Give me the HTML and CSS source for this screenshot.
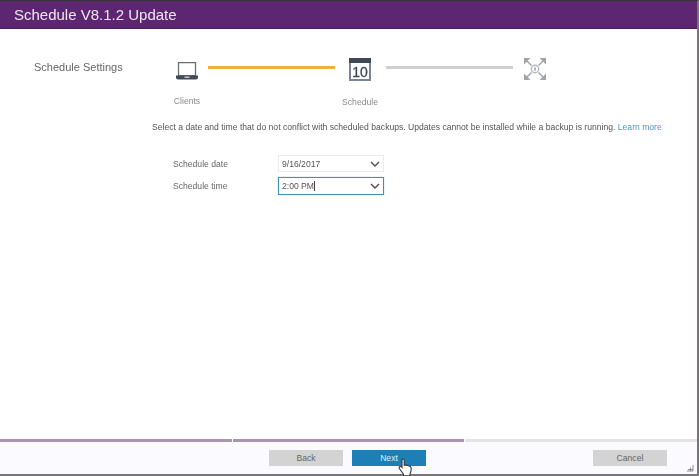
FILE: index.html
```html
<!DOCTYPE html>
<html lang="en">
<head>
  <meta charset="UTF-8" />
  <title>Schedule V8.1.2 Update</title>
  <link rel="stylesheet" href="styles.css">
</head>
<body>
  <div class="dialog">
    <header class="title-bar">Schedule V8.1.2 Update</header>

    <main class="content">
      <div class="wizard">
        <h2 class="section-name">Schedule Settings</h2>
        <div class="steps">
          <div class="step step-clients">
            <svg class="step-icon" width="22" height="18" viewBox="0 0 22 18">
              <path d="M2.500 .7h17v13h-17z" fill="#fff" stroke="#666e7a" stroke-width="1.300"/>
              <path d="M0 13.500h22v2a2 2 0 0 1-2 2H2a2 2 0 0 1-2-2z" fill="#434b58"/>
              <rect x="8.500" y="14.500" width="5" height="1.400" fill="#c9ccd1"/>
            </svg>
            <span class="step-label">Clients</span>
          </div>
          <div class="connector connector-done"></div>
          <div class="step step-schedule">
            <svg class="step-icon" width="22" height="23" viewBox="0 0 22 23">
              <rect x="1" y="1" width="20" height="21" fill="#fff" stroke="#7a8494" stroke-width="2"/>
              <rect x="0" y="0" width="22" height="5" fill="#3f4855"/>
              <text class="cal-day" x="11" y="19" text-anchor="middle">10</text>
            </svg>
            <span class="step-label">Schedule</span>
          </div>
          <div class="connector"></div>
          <div class="step step-update">
            <svg class="step-icon" width="22" height="22" viewBox="0 0 22 22">
              <path d="M7.500 7.500L3 3M14.500 7.500L19 3M7.500 14.500L3 19M14.500 14.500L19 19" stroke="#a4a8ac" stroke-width="1.500" fill="none"/>
              <path d="M0 0h6.500L0 6.500zM22 0v6.500L15.500 0zM0 22v-6.500L6.500 22zM22 22h-6.500L22 15.500z" fill="#a0a4a8"/>
              <circle cx="11" cy="11" r="3.700" fill="#fff" stroke="#b5b8bc" stroke-width="1.400"/>
              <path d="M11 9.200v3.600" stroke="#83888e" stroke-width="1.200"/>
            </svg>
          </div>
        </div>
      </div>

      <p class="note">Select a date and time that do not conflict with scheduled backups. Updates cannot be installed while a backup is running. <a href="#">Learn more</a></p>

      <form class="schedule-form">
        <label class="field">
          <span class="field-label">Schedule date</span>
          <span class="picker">9/16/2017
            <svg class="chevron" width="10" height="6" viewBox="0 0 10 6"><path d="M1 1l4 4 4-4" fill="none" stroke="#4b4f54" stroke-width="1.400"/></svg>
          </span>
        </label>
        <label class="field">
          <span class="field-label">Schedule time</span>
          <span class="picker picker-focus"><span>2:00 PM<i class="caret"></i></span>
            <svg class="chevron" width="10" height="6" viewBox="0 0 10 6"><path d="M1 1l4 4 4-4" fill="none" stroke="#4b4f54" stroke-width="1.400"/></svg>
          </span>
        </label>
      </form>
    </main>

    <footer class="footer">
      <div class="progress">
        <div class="progress-part part-done"></div>
        <div class="progress-part part-done"></div>
        <div class="progress-part"></div>
      </div>
      <div class="actions">
        <button class="btn" type="button">Back</button>
        <button class="btn btn-primary" type="button">Next</button>
        <button class="btn btn-cancel" type="button">Cancel</button>
        <svg class="cursor" width="15" height="19" viewBox="0 0 15 19">
          <path d="M4 1.500c1-1 2.200-.5 2.200.8v5l1.200-.4 1.600.3 1.600.5 1.600.8c.8.6 1 1.200 1 2.200 0 2-.4 3.600-1.200 5.200v2H5.500v-1.600L1.700 11c-.8-1-.6-2 .2-2.400.7-.3 1.300 0 2.100.9z" fill="#fff" stroke="#33373c" stroke-width="1.100"/>
        </svg>
        <svg class="grip" width="8" height="8" viewBox="0 0 8 8"><path d="M7 1v6H1M4.500 3.500V7M2 5.500h5" fill="none" stroke="#8b8f93" stroke-width="1"/></svg>
      </div>
    </footer>
  </div>
</body>
</html>
```

FILE: styles.css
```css
html, body {
  margin: 0;
  height: 100%;
}

body {
  font-family: "Liberation Sans", Arial, sans-serif;
  background: #fff;
  overflow: hidden;
}

.dialog {
  display: flex;
  flex-direction: column;
  box-sizing: border-box;
  width: 699px;
  height: 476px;
  border-top: 1px solid #3b3340;
  border-right: 2px solid #77757a;
  border-bottom: 2px solid #77757a;
  filter: blur(0.4px);
}

.title-bar {
  height: 27px;
  padding-left: 14px;
  background: #5c2670;
  border-bottom: 1px solid #47205a;
  color: #f0e6f3;
  font-size: 15px;
  line-height: 27px;
}

.content {
  flex: 1;
}

.wizard {
  display: flex;
  padding: 29px 0 0 34px;
}

.section-name {
  width: 142px;
  margin: 2px 0 0;
  color: #666;
  font-size: 11px;
  font-weight: normal;
  line-height: 14px;
}

.steps {
  display: flex;
  align-items: flex-start;
}

.step {
  display: flex;
  flex-direction: column;
  align-items: center;
  width: 22px;
}

.step-icon {
  flex: none;
}

.step-clients .step-icon {
  margin-top: 4px;
}

.step-schedule {
  margin-left: 14px;
}

.step-update {
  margin-left: 11px;
}

.step-label {
  margin-top: 16px;
  color: #8a8a8a;
  font-size: 8.6px;
  line-height: 11px;
  white-space: nowrap;
}

.cal-day {
  fill: #3f4855;
  stroke: #3f4855;
  stroke-width: 0.3px;
  font-size: 14px;
}

.connector {
  width: 127px;
  height: 3px;
  margin: 8px 0 0 15px;
  background: #cfcfcf;
}

.connector-done {
  margin-left: 10px;
  background: #ecb03f;
}

.note {
  margin: 13px 0 0 152px;
  color: #555;
  font-size: 8.6px;
  line-height: 12px;
  white-space: nowrap;
}

.note a {
  color: #3f9fc4;
  text-decoration: none;
}

.schedule-form {
  display: flex;
  flex-direction: column;
  gap: 5px;
  margin: 22px 0 0 173px;
}

.field {
  display: flex;
  align-items: center;
}

.field-label {
  width: 105px;
  color: #666;
  font-size: 8.6px;
}

.picker {
  display: flex;
  align-items: center;
  justify-content: space-between;
  box-sizing: border-box;
  width: 106px;
  height: 17px;
  padding: 0 3px 0 3px;
  border: 1px solid #ececec;
  color: #555;
  font-size: 8.6px;
}

.picker-focus {
  height: 18px;
  border-color: #3f93b0;
  box-shadow: 0 0 1px #8cc4d8;
}

.caret {
  display: inline-block;
  width: 1px;
  height: 10px;
  background: #444;
  vertical-align: -2px;
}

.footer {
  display: flex;
  flex-direction: column;
}

.progress {
  display: flex;
  gap: 1px;
}

.progress-part {
  flex: 1;
  height: 3px;
  background: #e6e3e8;
}

.part-done {
  background: #ab93b3;
}

.actions {
  display: flex;
  position: relative;
  height: 32px;
  padding: 8px 0 0 269px;
  box-sizing: border-box;
  background: #fbfaff;
}

.btn {
  width: 74px;
  height: 16px;
  padding: 0;
  border: 0;
  background: #d3d3d3;
  color: #666;
  font-family: inherit;
  font-size: 8.6px;
}

.btn-primary {
  margin-left: 9px;
  background: #1c7fb5;
  color: #dff0fa;
}

.btn-cancel {
  margin-left: 167px;
}

.cursor {
  position: absolute;
  left: 398px;
  top: 16px;
}

.grip {
  position: absolute;
  right: 3px;
  bottom: 2px;
}
```
